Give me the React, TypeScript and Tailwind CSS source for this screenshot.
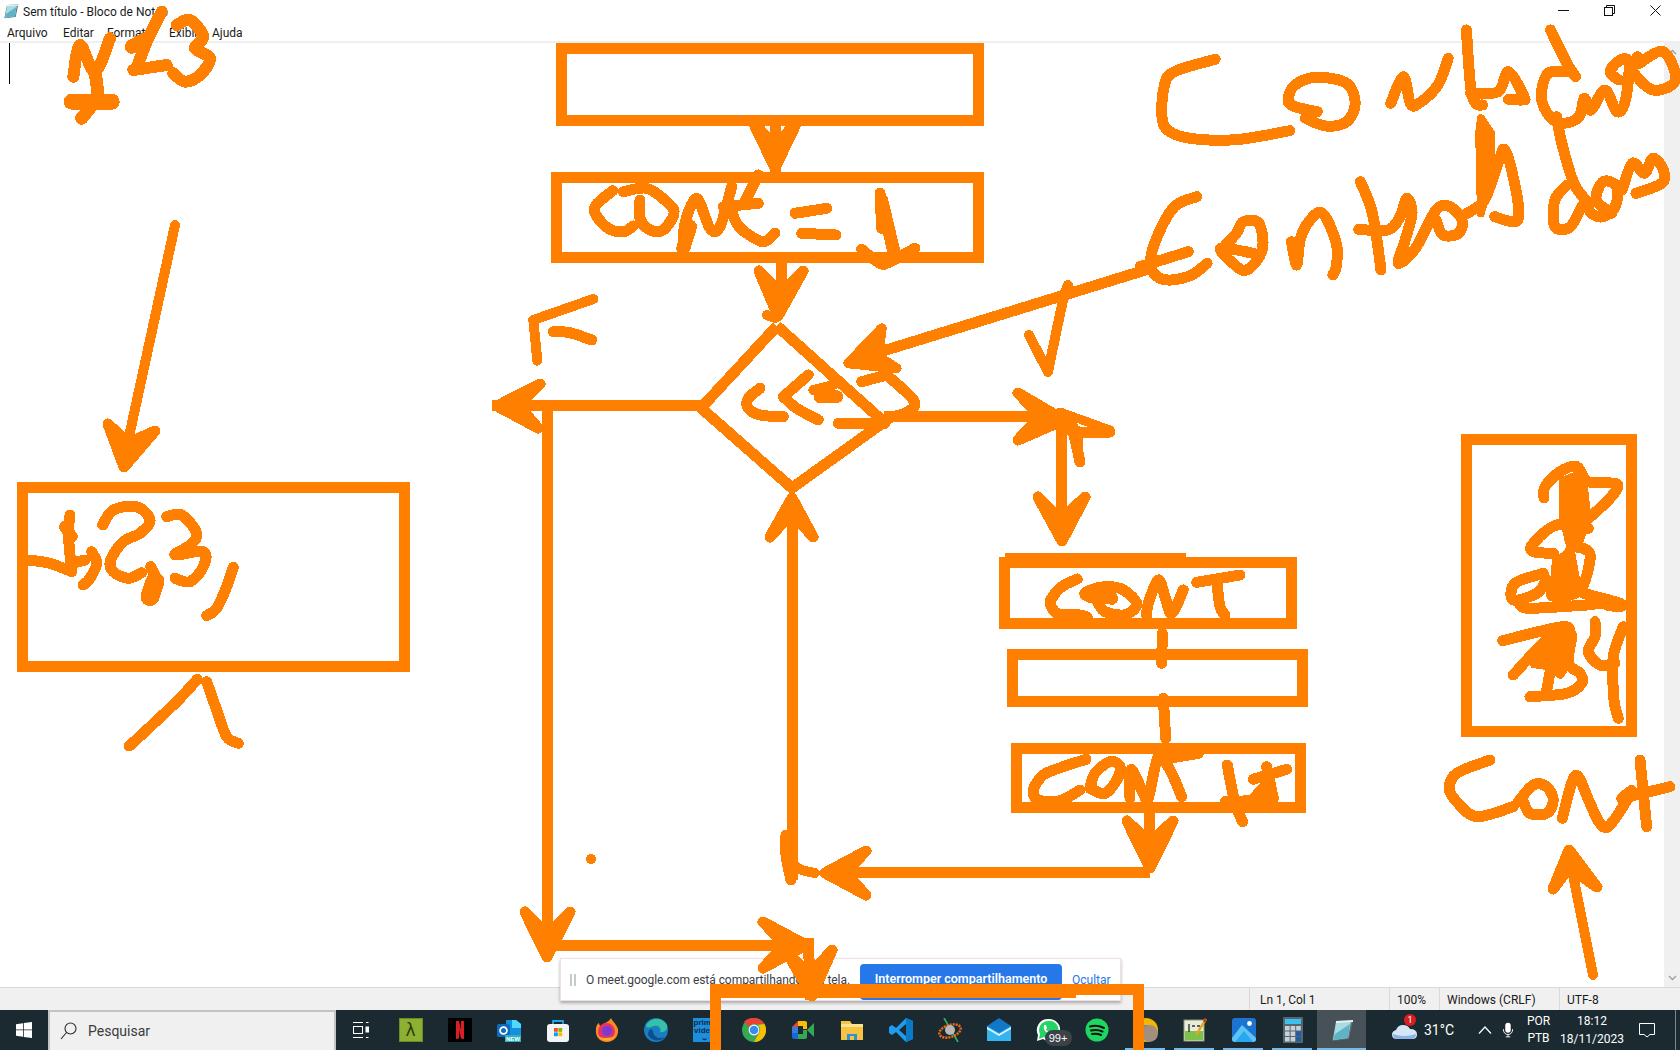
import React from "react";

type S = { o: [number, number]; p: number[]; w?: number; sx?: number; f?: boolean };

const Z5 = (p: number[], w = 11): S => ({ o: [1140, 0], p, w, sx: 2.904 });
const Z6 = (p: number[], w = 11, f = false): S => ({ o: [520, 150], p, w, f });
const Z7 = (p: number[], w = 11, f = false): S => ({ o: [980, 540], p, w, f });
const Z8 = (p: number[], w = 11, f = false): S => ({ o: [1440, 430], p, w, f });
const Z9 = (p: number[], w = 11): S => ({ o: [0, 470], p, w });
const Z1 = (p: number[], w = 12): S => ({ o: [0, 0], p, w });
const F = (p: number[], w = 11, f = false): S => ({ o: [0, 0], p, w, sx: 1, f });

const strokes: S[] = [
  // top-left 123
  Z1([220, 230, 240, 135, 285, 215, 330, 115]),
  Z1([285, 215, 290, 290, 245, 355], 13),
  Z1([215, 305, 335, 305], 16),
  Z1([485, 35, 440, 125, 410, 205]),
  Z1([400, 210, 500, 195]),
  Z1([395, 140, 430, 120], 14),
  Z1([530, 75, 570, 60, 610, 110, 585, 145, 630, 175, 600, 225, 555, 245, 520, 220]),
  // left box writing
  Z9([210, 135, 205, 190, 215, 305]),
  Z9([195, 170, 215, 200], 12),
  Z9([84, 270, 150, 280, 215, 305]),
  Z9([215, 280, 255, 270]),
  Z9([275, 245, 290, 280, 270, 325, 250, 345]),
  Z9([308, 165, 340, 120, 410, 110, 450, 150, 420, 190, 370, 215, 332, 270, 340, 305, 385, 325, 425, 308]),
  Z9([452, 290, 475, 335]),
  Z9([465, 335, 450, 380], 19),
  Z9([500, 140, 545, 135, 590, 190, 570, 225, 525, 255, 610, 245, 610, 290, 570, 335, 525, 325]),
  Z9([700, 292, 680, 350, 650, 415, 620, 437]),
  Z9([388, 828, 440, 780, 530, 695, 592, 628]),
  Z9([620, 635, 650, 720, 680, 800, 715, 820]),
  // CONT=1
  Z6([278, 122, 228, 165, 228, 195, 265, 235, 310, 245, 340, 228]),
  Z6([310, 125, 380, 115, 440, 155, 462, 190, 430, 240, 390, 240, 360, 205, 360, 150]),
  Z6([490, 295, 495, 220, 530, 145, 570, 235, 600, 230, 635, 110]),
  Z6([490, 295, 510, 230], 14),
  Z6([630, 170, 650, 220, 680, 250, 730, 275, 765, 250]),
  Z6([610, 170, 715, 160]),
  Z6([715, 75, 670, 165]),
  Z6([825, 190, 920, 175]),
  Z6([845, 250, 948, 255]),
  Z6([1080, 130, 1085, 235]),
  Z6([1085, 150, 1125, 320], 13),
  Z6([1025, 298, 1080, 340, 1110, 335, 1185, 295]),
  // F label
  Z6([52, 632, 40, 510], 10),
  Z6([40, 510, 220, 447], 10),
  Z6([100, 545, 150, 548, 215, 570]),
  // <<5
  Z6([720, 715, 685, 745, 685, 775, 720, 795, 790, 800]),
  Z6([865, 675, 790, 740]),
  Z6([790, 740, 830, 775, 895, 810]),
  Z6([880, 720, 940, 705], 10),
  Z6([900, 740, 950, 740], 13),
  Z6([1025, 695, 1100, 675]),
  Z6([1100, 675, 1180, 750, 1165, 785, 1100, 805]),
  Z6([955, 820, 1095, 820]),
  Z6([1085, 535, 985, 640, 1130, 655, 1075, 620], 10, true),
  // CONT
  Z7([292, 117, 245, 140, 215, 175, 212, 195, 235, 222, 300, 225, 322, 232]),
  Z7([395, 177, 340, 175, 315, 160, 360, 142, 420, 145, 465, 180, 465, 205, 430, 225, 375, 215, 355, 190]),
  Z7([340, 160, 395, 175], 13),
  Z7([500, 225, 505, 190, 535, 120, 555, 170, 575, 220, 610, 150]),
  Z7([650, 127, 780, 105]),
  Z7([710, 120, 720, 200, 735, 225]),
  // CONT+1
  Z7([318, 658, 250, 680, 190, 705, 160, 750, 175, 780, 240, 782, 300, 750]),
  Z7([330, 745, 345, 700, 390, 665, 420, 680, 410, 720, 375, 760, 340, 750]),
  Z7([450, 775, 450, 700, 460, 695, 490, 760, 505, 775, 535, 650, 570, 690, 605, 770]),
  Z7([535, 660, 655, 640]),
  Z7([742, 675, 765, 790, 788, 845]),
  Z7([735, 785, 870, 780]),
  Z7([820, 718, 920, 688]),
  Z7([860, 680, 880, 775]),
  Z7([820, 770, 860, 725, 880, 780], 8, true),
  // connectors
  Z7([547, 280, 545, 370]),
  Z7([550, 475, 557, 595]),
  // Conluções
  Z5([218, 178, 100, 215, 70, 260, 65, 360, 95, 400, 170, 418, 290, 418, 435, 392]),
  Z5([515, 335, 450, 320, 430, 300, 450, 255, 515, 232, 600, 250, 625, 310, 600, 365, 540, 378, 480, 355]),
  Z5([728, 310, 765, 230, 785, 310, 810, 310, 865, 255, 895, 175]),
  Z5([948, 90, 960, 260, 975, 310, 995, 315]),
  Z5([960, 280, 1040, 275, 1070, 215, 1115, 290, 1110, 300, 1070, 298]),
  Z5([1192, 90, 1240, 190, 1265, 230]),
  Z5([1240, 215, 1185, 220, 1165, 290, 1190, 350, 1230, 370, 1275, 350, 1290, 295, 1310, 330, 1350, 270, 1385, 335, 1410, 300, 1420, 190, 1395, 180, 1365, 215, 1390, 240]),
  Z5([1445, 170, 1430, 210, 1490, 270, 1555, 240, 1520, 155, 1450, 190]),
  Z5([1210, 350, 1225, 430, 1260, 550, 1295, 600]),
  Z5([1240, 555, 1205, 600, 1205, 680, 1250, 680, 1290, 610, 1310, 640, 1345, 650, 1380, 620, 1385, 560, 1345, 545, 1325, 600, 1370, 640]),
  Z5([1400, 570, 1430, 490, 1465, 520, 1490, 475, 1520, 510, 1515, 550, 1440, 580]),
  // Contadores
  Z5([165, 590, 100, 620, 50, 710, 30, 790, 50, 830, 90, 840, 150, 825, 195, 790]),
  Z5([0, 800, 140, 755]),
  Z5([240, 745, 280, 700, 300, 665, 345, 670, 355, 750, 310, 810, 270, 790, 235, 745, 330, 760]),
  Z5([440, 725, 455, 795, 465, 720, 490, 665, 530, 640, 570, 730, 570, 800, 560, 825]),
  Z5([640, 545, 675, 640, 700, 810]),
  Z5([635, 688, 720, 690, 755, 650, 775, 595, 790, 640, 770, 720, 750, 790, 800, 745, 860, 630, 900, 620, 935, 660, 925, 700, 880, 705, 860, 660]),
  { o: [1140, 0], p: [990, 355, 1020, 400, 1020, 520, 990, 640, 985, 400], w: 8, sx: 2.904, f: true },
  Z5([950, 640, 1000, 600, 1040, 490, 1060, 450, 1090, 560, 1100, 650, 1080, 665, 1030, 650]),
  // right column
  Z8([312, 203, 315, 170, 360, 125, 410, 110, 445, 155, 530, 162, 510, 205, 440, 270]),
  Z8([365, 150, 430, 125, 445, 260, 420, 340, 385, 340, 365, 260], 6, true),
  Z8([445, 295, 350, 285, 280, 340, 280, 365, 340, 370]),
  Z8([395, 290, 395, 350, 340, 470, 345, 500, 420, 480, 450, 390, 440, 360, 405, 350]),
  Z8([345, 390, 395, 360, 415, 470, 335, 495], 6, true),
  Z8([310, 430, 225, 460, 220, 510, 290, 490, 320, 450]),
  Z8([240, 525, 270, 535, 440, 525, 480, 520, 530, 530, 540, 520, 430, 490]),
  Z8([505, 522, 540, 525], 14),
  Z8([188, 632, 370, 590, 385, 620, 395, 620, 385, 700, 420, 730, 425, 760, 380, 790, 270, 800]),
  Z8([220, 735, 330, 620, 340, 660, 335, 700, 320, 780]),
  Z8([300, 650, 370, 605, 390, 650, 375, 720, 280, 705], 6, true),
  Z8([360, 730, 375, 635]),
  Z8([465, 575, 465, 620, 445, 665, 480, 705, 525, 700]),
  Z8([550, 590, 520, 680, 522, 810, 535, 865]),
  // Cont
  Z8([150, 990, 50, 1030, 28, 1075, 50, 1115, 110, 1160, 220, 1130]),
  Z8([235, 1115, 280, 1065, 320, 1070, 340, 1110, 320, 1150, 270, 1150, 250, 1115]),
  Z8([367, 1165, 395, 1060, 415, 1040, 450, 1120, 480, 1180, 510, 1185, 575, 1085, 545, 1105]),
  Z8([600, 990, 620, 1190]),
  Z8([545, 1105, 690, 1070]),
  // check mark
  F([1029, 335, 1048, 372], 10),
  F([1048, 372, 1062, 305, 1068, 285], 10),
  // long lines
  F([175, 225, 125, 455], 10),
  F([1152, 268, 870, 355], 11),
  F([1593, 975, 1570, 860], 10),
  F([786, 835, 786, 855, 791, 880], 11),
  F([795, 866, 802, 870, 815, 873], 10),
  F([1072, 432, 1110, 432], 11),
  F([1060, 412, 1110, 430], 9),
  F([1072, 425, 1080, 462], 11),
  F([1078, 430, 1080, 460], 8),
  F([767, 315, 775, 318], 10),
];

const heads: number[][] = [
  [753, 122, 775, 146, 797, 122, 775, 168],
  [759, 271, 781, 293, 803, 271, 778, 316],
  [540, 384, 518, 405, 538, 428, 497, 406],
  [525, 912, 547, 935, 570, 912, 547, 957],
  [763, 922, 785, 945, 763, 968, 806, 945],
  [787, 952, 810, 975, 832, 950, 812, 996],
  [1018, 393, 1040, 416, 1018, 440, 1064, 420],
  [1038, 497, 1061, 520, 1085, 497, 1062, 541],
  [770, 537, 792, 513, 813, 537, 792, 498],
  [866, 851, 845, 873, 866, 895, 825, 873],
  [1127, 821, 1150, 843, 1173, 821, 1150, 868],
  [108, 424, 128, 443, 155, 431, 124, 467],
  [1553, 889, 1569, 868, 1597, 887, 1569, 850],
];

const toXY = (s: S) => {
  const sx = s.sx ?? 3;
  const out: [number, number][] = [];
  for (let i = 0; i < s.p.length; i += 2) {
    const x = s.sx === 1 ? s.p[i] : s.o[0] + s.p[i] / sx;
    const y = s.sx === 1 ? s.p[i + 1] : s.o[1] + s.p[i + 1] / 3;
    out.push([x, y]);
  }
  return out;
};

const smooth = (s: S) => {
  const a = toXY(s);
  const n = (v: number) => v.toFixed(1);
  if (s.f) return "M" + a.map((q) => `${n(q[0])} ${n(q[1])}`).join("L") + "Z";
  let d = `M${n(a[0][0])} ${n(a[0][1])}`;
  for (let i = 0; i < a.length - 1; i++) {
    const p0 = a[Math.max(i - 1, 0)];
    const p1 = a[i];
    const p2 = a[i + 1];
    const p3 = a[Math.min(i + 2, a.length - 1)];
    d += `C${n(p1[0] + (p2[0] - p0[0]) / 6)} ${n(p1[1] + (p2[1] - p0[1]) / 6)} ${n(p2[0] - (p3[0] - p1[0]) / 6)} ${n(p2[1] - (p3[1] - p1[1]) / 6)} ${n(p2[0])} ${n(p2[1])}`;
  }
  return d;
};

function Drawing() {
  const c = "#ff8000";
  return (
    <svg className="absolute inset-0 z-20 pointer-events-none" width="1680" height="1050" viewBox="0 0 1680 1050" fill="none" shapeRendering="crispEdges">
      <g stroke={c} strokeWidth="11" fill="none">
        <rect x="561.5" y="48.5" width="417" height="72" />
        <rect x="556.5" y="177.5" width="422" height="80" />
        <rect x="22.5" y="487.5" width="382" height="179" />
        <rect x="1466.5" y="439.5" width="165" height="292" />
        <rect x="1004.5" y="562.5" width="287" height="61" />
        <rect x="1012.5" y="654.5" width="290" height="47" />
        <rect x="1016.5" y="748.5" width="284" height="59" />
        <path d="M715.5 1053V989.5H1138.5V1053" />
        <path d="M716 991H1076" strokeWidth="14" />
        <path d="M1005 558H1186" strokeWidth="10" />
        <path d="M775 126V172M781 263V300" />
        <path d="M777 326L701 408L792 488L884 422L777 326" />
        <path d="M701 405.5H492M547.5 405V945M547.5 945.5H800M808 938L811 1000" />
        <path d="M884 416.5H1050M1061.5 416V530M792.5 500V880M840 872.5H1150M1149.5 813V860" />
      </g>
      <g fill={c} stroke={c} strokeWidth="11" strokeLinejoin="round">
        {heads.map((h, i) => (
          <polygon key={i} points={`${h[0]},${h[1]} ${h[2]},${h[3]} ${h[4]},${h[5]} ${h[6]},${h[7]}`} />
        ))}
      </g>
      <g stroke={c} strokeLinecap="round" strokeLinejoin="round">
        {strokes.map((s, i) => (
          <path key={i} d={smooth(s)} strokeWidth={s.w ?? 11} fill={s.f ? c : "none"} />
        ))}
      </g>
      <circle cx="591" cy="859" r="5" fill={c} />
    </svg>
  );
}

const NotepadIcon = ({ size = 16 }: { size?: number }) => (
  <svg width={size} height={size} viewBox="0 0 24 24" shapeRendering="geometricPrecision">
    <path d="M6 3L23 2L19 21L2 23Z" fill="#5d6f78" />
    <path d="M6 4L21 3L18 20L3 22Z" fill="#a9dbe4" />
    <path d="M5 16L20 6L18 20L3 22Z" fill="#5fb3c4" />
    <path d="M6 3L23 2L23 4L6 5Z" fill="#e8f0f2" />
  </svg>
);

const Icons: Record<string, React.ReactNode> = {
  lambda: (
    <div className="w-[24px] h-[24px] bg-[#8db032] border border-[#6d8a23] flex items-center justify-center text-[#2e3b10] text-[17px] leading-none [font-family:'DejaVu_Sans',sans-serif]">λ</div>
  ),
  netflix: (
    <svg width="24" height="24" viewBox="0 0 24 24">
      <rect width="24" height="24" fill="#000" />
      <path d="M8 3H11L13 12V3H16V21L13 20.5L11 12V20.5L8 21Z" fill="#d81f26" />
    </svg>
  ),
  outlook: (
    <svg width="24" height="24" viewBox="0 0 24 24">
      <path d="M9 2H19L24 6V18H9Z" fill="#1490df" />
      <path d="M15 2H19L24 6V10H15Z" fill="#50d9ff" />
      <rect x="0" y="6" width="13" height="13" rx="1.5" fill="#0f6cbd" />
      <circle cx="6.5" cy="12.5" r="3.4" fill="none" stroke="#fff" strokeWidth="1.8" />
      <rect x="8" y="17" width="16" height="7" fill="#2bb3c0" />
      <text x="16" y="23" fontSize="6" fontWeight="700" fill="#fff" textAnchor="middle" fontFamily="Liberation Sans, sans-serif">NEW</text>
    </svg>
  ),
  store: (
    <svg width="24" height="24" viewBox="0 0 24 24">
      <path d="M7 6V3H17V6" fill="none" stroke="#1ea7e8" strokeWidth="1.8" />
      <rect x="1" y="6" width="22" height="18" rx="3" fill="#f4f4f4" />
      <rect x="8" y="10" width="3.8" height="3.8" fill="#f25022" />
      <rect x="12.4" y="10" width="3.8" height="3.8" fill="#7fba00" />
      <rect x="8" y="14.4" width="3.8" height="3.8" fill="#00a4ef" />
      <rect x="12.4" y="14.4" width="3.8" height="3.8" fill="#ffb900" />
    </svg>
  ),
  firefox: (
    <svg width="24" height="24" viewBox="0 0 24 24">
      <path d="M16 0C17 3 21 5 23 11C24 19 18 24 12 24C5 24 0 19 1 11C1 8 3 5 4 5C4 7 5 8 6 8C8 5 13 5 16 0Z" fill="#ff8a1f" />
      <circle cx="11.5" cy="13.5" r="8.5" fill="#e3316c" />
      <circle cx="12" cy="13" r="5" fill="#7a3cd0" />
      <path d="M4 19C8 24 17 24 21 17C18 20 10 21 4 19Z" fill="#ffb01f" />
    </svg>
  ),
  edge: (
    <svg width="24" height="24" viewBox="0 0 24 24">
      <circle cx="12" cy="12" r="12" fill="#1b7ec2" />
      <path d="M2 8C5 0 18-2 23 7C24 12 20 15 16 14C18 10 14 7 10 8C6 9 4 11 2 8Z" fill="#35c1a8" />
      <path d="M9 13C9 18 14 22 21 19C17 24 8 24 4 17C4 12 7 9 9 13Z" fill="#0c4f8f" />
    </svg>
  ),
  prime: (
    <div className="w-[24px] h-[24px] bg-[#1a8fe0] text-[#10293f] text-[8px] leading-[8px] font-bold text-center pt-[1px] [font-family:'Liberation_Sans',sans-serif]">prime<br />video<br />⌣</div>
  ),
  chrome: (
    <svg width="24" height="24" viewBox="0 0 24 24">
      <circle cx="12" cy="12" r="12" fill="#34a853" />
      <path d="M12 0A12 12 0 0 1 22.4 6H12A6 6 0 0 0 6.8 9L2 3.6A12 12 0 0 1 12 0Z" fill="#ea4335" />
      <path d="M22.4 6A12 12 0 0 1 12 24L17 15A6 6 0 0 0 16 7Z" fill="#fbbc04" />
      <circle cx="12" cy="12" r="5.4" fill="#fff" />
      <circle cx="12" cy="12" r="4.3" fill="#4285f4" />
    </svg>
  ),
  meet: (
    <svg width="24" height="24" viewBox="0 0 24 24">
      <path d="M1 9L7 3V9Z" fill="#ea4335" />
      <rect x="1" y="9" width="6" height="6" fill="#2f7de1" />
      <path d="M1 15H7V21H3Q1 21 1 19Z" fill="#1967d2" />
      <path d="M7 3H14Q16 3 16 5V11H12V8H7Z" fill="#fbbc04" />
      <path d="M7 21H14Q16 21 16 19V12H12V16H7Z" fill="#34a853" />
      <path d="M16 12L23 5V19Z" fill="#34a853" />
    </svg>
  ),
  folder: (
    <svg width="24" height="24" viewBox="0 0 24 24">
      <path d="M1 3H10L12 6H23V22H1Z" fill="#f6c343" />
      <rect x="1" y="6" width="22" height="3" fill="#fce28a" />
      <path d="M7 22V16H17V22H14V18H10V22Z" fill="#2f8fd8" />
    </svg>
  ),
  vscode: (
    <svg width="24" height="24" viewBox="0 0 24 24">
      <path d="M17 0L24 3V21L17 24L7 14L3 17L0 15V9L3 7L7 10Z" fill="#1f9cf0" />
      <path d="M17 6V18L10 12Z" fill="#1b2a30" />
      <path d="M17 0L24 3V21L17 24Z" fill="#0a7ac8" />
    </svg>
  ),
  ring: (
    <svg width="24" height="24" viewBox="0 0 24 24">
      <path d="M6 0L20 24" stroke="#22c55e" strokeWidth="1.5" />
      <ellipse cx="12" cy="13" rx="11" ry="6" transform="rotate(-18 12 13)" fill="none" stroke="#ea6a10" strokeWidth="2.5" strokeDasharray="2 1" />
      <circle cx="12" cy="12" r="5" fill="#b9b9b9" />
    </svg>
  ),
  mail: (
    <svg width="24" height="24" viewBox="0 0 24 24">
      <rect x="0" y="8" width="24" height="15" fill="#35b5ef" />
      <path d="M0 8L12 0L24 8L12 15Z" fill="#1277c9" />
      <path d="M0 9L12 16L24 9V11L12 18L0 11Z" fill="#dff3fc" />
    </svg>
  ),
  whatsapp: (
    <div className="relative w-[24px] h-[24px]">
      <svg width="24" height="24" viewBox="0 0 24 24">
        <path d="M12 1A11 11 0 0 0 2 17L1 23L7 21A11 11 0 1 0 12 1Z" fill="#fff" />
        <path d="M12 3A9 9 0 0 0 4 16L3 21L8 19A9 9 0 1 0 12 3Z" fill="#25d366" />
        <path d="M8 7L10 7L11 10L10 11.5Q12 14 14 15L15.5 13.5L18 15V17Q14 18 10 14Q7 11 8 7Z" fill="#fff" />
      </svg>
      <div className="absolute left-[9px] top-[12px] w-[27px] h-[16px] rounded-full bg-[#3b4347] text-white text-[11px] leading-[16px] text-center [font-family:'Liberation_Sans',sans-serif]">99+</div>
    </div>
  ),
  spotify: (
    <svg width="24" height="24" viewBox="0 0 24 24">
      <circle cx="12" cy="12" r="11.5" fill="#1ed760" />
      <path d="M5 8.5Q12 6.5 19 10M6 12.5Q12 11 17.5 13.5M7 16Q12 15 16 17" fill="none" stroke="#111" strokeWidth="2" strokeLinecap="round" />
    </svg>
  ),
  chrome2: (
    <div className="relative w-[24px] h-[24px]">
      <svg width="24" height="24" viewBox="0 0 24 24">
        <circle cx="12" cy="12" r="12" fill="#f2b705" />
        <circle cx="12" cy="12" r="5" fill="#4285f4" />
      </svg>
      <div className="absolute left-[7px] top-[7px] w-[17px] h-[17px] rounded-full bg-[#a38f7f]" />
    </div>
  ),
  npp: (
    <svg width="24" height="24" viewBox="0 0 24 24">
      <rect x="1" y="2" width="20" height="21" fill="#e8ecd8" stroke="#8d9a72" />
      <rect x="2" y="13" width="18" height="9" fill="#7cc24a" />
      <path d="M6 6V14M9 8H12M14 8H17" stroke="#333" strokeWidth="1.4" />
      <path d="M23 1L13 17" stroke="#e2a52b" strokeWidth="2.4" />
      <path d="M23 1L21 4" stroke="#c43c1e" strokeWidth="2.4" />
    </svg>
  ),
  photos: (
    <svg width="24" height="24" viewBox="0 0 24 24">
      <rect width="24" height="24" rx="3" fill="#1b75d0" />
      <path d="M0 20L10 7L24 20V21Q24 24 21 24H3Q0 24 0 21Z" fill="#5ec4f5" />
      <path d="M3 24L12 13L21 24Z" fill="#29a8ef" />
      <circle cx="17.5" cy="5.5" r="2.4" fill="#fff" />
    </svg>
  ),
  calc: (
    <svg width="20" height="26" viewBox="0 0 20 26">
      <rect width="20" height="26" rx="1" fill="#56656f" />
      <rect x="2" y="2" width="16" height="5" fill="#3dc0ec" />
      {[0, 1, 2].flatMap((r) =>
        [0, 1, 2].map((c) => <rect key={`${r}${c}`} x={2 + c * 5.6} y={9 + r * 5.5} width="4.6" height="4.5" fill={c === 2 && r > 0 ? "#1b5fa8" : "#c9d1d6"} />)
      )}
    </svg>
  ),
  notepad: <NotepadIcon size={24} />,
};

const slots: { k: string; line?: boolean; active?: boolean }[] = [
  { k: "lambda" }, { k: "netflix" }, { k: "outlook" }, { k: "store" }, { k: "firefox" }, { k: "edge" }, { k: "prime" },
  { k: "chrome" }, { k: "meet" }, { k: "folder" }, { k: "vscode" }, { k: "ring" }, { k: "mail" }, { k: "whatsapp" }, { k: "spotify" },
  { k: "chrome2", line: true }, { k: "npp", line: true }, { k: "photos", line: true }, { k: "calc", line: true }, { k: "notepad", line: true, active: true },
];

const menu: [string, string][] = [["Arquivo", "w-[56px]"], ["Editar", "w-[44px]"], ["Formatar", "w-[62px]"], ["Exibir", "w-[43px]"], ["Ajuda", "w-[50px]"]];

function Taskbar() {
  return (
    <div className="h-[40px] shrink-0 flex items-stretch bg-[#1b2a30] text-white">
      <div className="w-[48px] flex items-center justify-center">
        <svg width="16" height="16" viewBox="0 0 16 16" fill="#fff">
          <path d="M0 2.3L7 1.2V7.5H0ZM7.8 1.1L16 0V7.5H7.8ZM0 8.3H7V14.8L0 13.7ZM7.8 8.3H16V16L7.8 14.9Z" />
        </svg>
      </div>
      <div className="w-[288px] bg-[#f0f0f0] border-2 border-b-0 border-[#c4c4c4] flex items-center text-[#3b3b3b] text-[14px] pl-[10px]">
        <svg width="17" height="18" viewBox="0 0 17 18" fill="none" stroke="#2b2b2b" strokeWidth="1.1">
          <circle cx="10.5" cy="6.5" r="5.5" />
          <path d="M6.5 10.5L1 17" />
        </svg>
        <span className="ml-[11px]">Pesquisar</span>
      </div>
      <div className="w-[48px] flex items-center justify-center mr-[2px]">
        <svg width="17" height="16" viewBox="0 0 17 16" fill="none" stroke="#fff" strokeWidth="1">
          <path d="M1 .5H11M1 15.5H11M14 .5H16.5M14 15.5H16.5" />
          <rect x="1.5" y="4.5" width="9" height="7" />
          <rect x="14" y="5" width="2.5" height="5" fill="#fff" />
        </svg>
      </div>
      {slots.map((s) => (
        <div key={s.k} className={`w-[49px] relative flex items-center justify-center ${s.active ? "bg-[#465257]" : ""}`}>
          {Icons[s.k]}
          {s.line ? <div className={`absolute bottom-0 h-[2px] bg-[#76b9ed] ${s.active ? "left-0 right-0" : "left-[4px] right-[5px]"}`} /> : null}
        </div>
      ))}
      <div className="ml-[26px] w-[26px] flex items-center">
        <div className="relative">
          <svg width="25" height="19" viewBox="0 0 25 19">
            <path d="M5 18Q0 18 0 13.5Q0 10 4 9Q6 4 11 4Q16 4 18 8Q25 8 25 13.5Q25 18 20 18Z" fill="#d7e6f7" />
            <path d="M1 13Q12 17 24 13Q24 18 20 18H5Q1 18 1 13Z" fill="#8db4e8" />
          </svg>
          <div className="absolute left-[12px] top-[-7px] w-[12px] h-[12px] rounded-full bg-[#d81e1e] text-white text-[9px] leading-[12px] text-center">1</div>
        </div>
      </div>
      <div className="ml-[6px] w-[40px] flex items-center text-[14px]">31°C</div>
      <div className="ml-[14px] w-[14px] flex items-center">
        <svg width="14" height="8" viewBox="0 0 14 8" fill="none" stroke="#fff" strokeWidth="1.2"><path d="M1 7.5L7 1L13 7.5" /></svg>
      </div>
      <div className="ml-[11px] w-[10px] flex items-center">
        <svg width="11" height="16" viewBox="0 0 11 16" fill="#fff">
          <rect x="2.5" y="0" width="6" height="11" rx="3" />
          <path d="M0.5 7V8A5 5 0 0 0 10.5 8V7M5.5 13V15.5M3 15.5H8" fill="none" stroke="#fff" strokeWidth="1" />
        </svg>
      </div>
      <div className="ml-[14px] w-[23px] flex flex-col items-center justify-center text-[12px] leading-[17px]">
        <span>POR</span>
        <span>PTB</span>
      </div>
      <div className="ml-[13px] w-[58px] flex flex-col items-center justify-center text-[12px] leading-[18px] whitespace-nowrap">
        <span>18:12</span>
        <span>18/11/2023</span>
      </div>
      <div className="ml-[18px] w-[16px] flex items-center">
        <svg width="16" height="16" viewBox="0 0 16 16" fill="none" stroke="#fff" strokeWidth="1"><path d="M.5 1.5H15.5V12.5H11L8 15L5 12.5H.5Z" /></svg>
      </div>
      <div className="ml-[20px] w-[1px] bg-[#7d888d]" />
    </div>
  );
}

export default function App() {
  return (
    <div className="relative w-[1680px] h-[1050px] overflow-hidden bg-white flex flex-col text-[#1a1a1a] [font-family:Roboto,'Liberation_Sans',sans-serif] text-[12px]">
      <div className="h-[21px] shrink-0 flex items-center pl-[3px]">
        <NotepadIcon size={16} />
        <span className="ml-[4px] mt-[2px]">Sem título - Bloco de Notas</span>
        <div className="ml-auto flex items-center pr-[2px] h-full">
          <div className="w-[46px] flex justify-center"><svg width="11" height="11" viewBox="0 0 11 11" stroke="#111"><path d="M0 5.5H11" /></svg></div>
          <div className="w-[46px] flex justify-center"><svg width="11" height="11" viewBox="0 0 11 11" fill="none" stroke="#111"><rect x=".5" y="2.5" width="8" height="8" /><path d="M2.5 2.5V.5H10.5V8.5H8.5" /></svg></div>
          <div className="w-[46px] flex justify-center"><svg width="11" height="11" viewBox="0 0 11 11" stroke="#111"><path d="M.5 .5L10.5 10.5M10.5 .5L.5 10.5" /></svg></div>
        </div>
      </div>
      <div className="h-[20px] shrink-0 flex items-center pl-[7px] pt-[3px]">
        {menu.map(([t, w]) => (<div key={t} className={w}>{t}</div>))}
      </div>
      <div className="h-[2px] shrink-0 bg-[#f0f0f0]" />
      <div className="flex-1 flex min-h-0">
        <div className="flex-1 pl-[9px]"><div className="w-[1px] h-[41px] bg-black" /></div>
        <div className="w-[16px] bg-[#f0f0f0] flex flex-col items-center justify-between py-[6px]">
          <svg width="9" height="6" viewBox="0 0 9 6" fill="none" stroke="#a0a0a0" strokeWidth="1.4"><path d="M1 5L4.5 1.5L8 5" /></svg>
          <svg width="9" height="6" viewBox="0 0 9 6" fill="none" stroke="#a0a0a0" strokeWidth="1.4"><path d="M1 1L4.5 4.5L8 1" /></svg>
        </div>
      </div>
      <div className="h-[23px] shrink-0 bg-[#f0f0f0] border-t border-[#d9d9d9] flex items-stretch pl-[1249px]">
        <div className="w-[140px] border-l border-[#d9d9d9] pl-[10px] pt-[2px] flex items-center">Ln 1, Col 1</div>
        <div className="w-[50px] border-l border-[#d9d9d9] pl-[7px] pt-[2px] flex items-center">100%</div>
        <div className="w-[120px] border-l border-[#d9d9d9] pl-[7px] pt-[2px] flex items-center">Windows (CRLF)</div>
        <div className="flex-1 border-l border-[#d9d9d9] pl-[7px] pt-[2px] flex items-center">UTF-8</div>
      </div>
      <Taskbar />

      <div className="absolute left-[560px] top-[958px] w-[561px] h-[43px] z-10 bg-white border border-[#f1dfe7] shadow-[0_2px_3px_rgba(0,0,0,0.3)] flex items-center text-[12px] text-[#3c4043] [font-family:Roboto,sans-serif]">
        <div className="ml-[9px] w-[2px] h-[12px] bg-[#c8c8c8]" />
        <div className="ml-[2px] w-[2px] h-[12px] bg-[#c8c8c8]" />
        <span className="ml-[10px] w-[274px] whitespace-nowrap tracking-[-0.05px]">O meet.google.com está compartilhando sua tela.</span>
        <div className="w-[202px] h-[36px] mt-[5px] pb-[6px] rounded-[4px] bg-[#2678e8] text-white font-semibold text-[12.5px] text-center leading-[30px]">Interromper compartilhamento</div>
        <span className="ml-[10px] text-[#2678e8]">Ocultar</span>
      </div>

      <Drawing />
    </div>
  );
}
